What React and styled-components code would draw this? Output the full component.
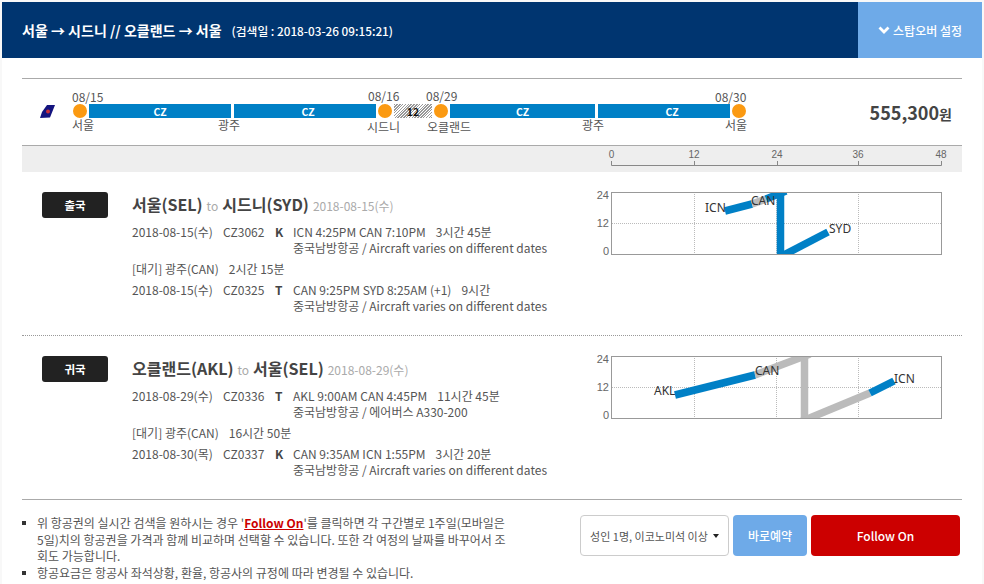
import styled, { createGlobalStyle } from "styled-components";

const GlobalStyle = createGlobalStyle`
  html, body {
    margin: 0;
    padding: 0;
    background: #f8f8f8;
  }
  body {
    font-family: "Noto Sans CJK KR", "Noto Sans", sans-serif;
    color: #555;
    font-size: 12px;
  }
`;

const Page = styled.div`
  width: 980px;
  height: 582px;
  margin: 2px 0 0 2px;
  background: #fff;
  overflow: hidden;
`;

const Header = styled.header`
  display: flex;
  align-items: center;
  height: 56px;
  background: #003570;
  color: #fff;
`;

const Route = styled.h1`
  margin: 0 10px 0 20px;
  font-size: 14px;
  font-weight: 700;
`;

const SearchDate = styled.span`
  flex: 1;
  font-size: 11.75px;
  font-weight: 500;
`;

const StopoverButton = styled.button`
  display: flex;
  align-items: center;
  justify-content: flex-end;
  gap: 3px;
  width: 124px;
  height: 56px;
  padding: 0 20px 0 0;
  border: 0;
  background: #6eaae8;
  color: #fff;
  font: 500 12px "Noto Sans CJK KR", sans-serif;
`;

const Content = styled.main`
  margin: 20px 20px 0;
`;

const Summary = styled.section`
  display: flex;
  align-items: center;
  height: 66px;
  border-top: 1px solid #aaa;
  border-bottom: 1px solid #aaa;
`;

const Logo = styled.svg`
  width: 16px;
  height: 16px;
  margin: 0 15px 0 18px;
  flex: none;
`;

const Track = styled.div`
  display: flex;
  align-items: center;
  height: 14px;
  position: relative;
  top: -1px;
`;

const Segment = styled.div`
  position: relative;
  display: flex;
  align-items: center;
  justify-content: center;
  box-sizing: border-box;
  flex: none;
  width: ${(p) => p.$width}px;
  height: 14px;
  margin-right: ${(p) => p.$gap || 0}px;
  padding-left: ${(p) => p.$pad || 0}px;
  background: #0080c6;
  color: #fff;
  font-size: 10.5px;
  font-weight: 700;
`;

const Layover = styled(Segment)`
  background: repeating-linear-gradient(135deg, #999 0 1px, #fff 1px 2px);
  color: #111;
`;

const Stop = styled.div`
  position: relative;
  z-index: 1;
  flex: none;
  box-sizing: content-box;
  width: 14px;
  height: 14px;
  border-radius: 50%;
  border: 2px solid #fff;
  background: #fb9a12;
`;

const Label = styled.span`
  position: absolute;
  left: ${(p) => p.$left}px;
  top: ${(p) => p.$top}px;
  white-space: nowrap;
  font-size: 12px;
  font-weight: 400;
  line-height: 16px;
  color: #555;
`;

const Price = styled.div`
  margin-left: auto;
  margin-right: 10px;
  color: #444;
  font-size: 18px;
  font-weight: 700;
  small {
    font-size: 14px;
    font-weight: 700;
  }
`;

const AxisBand = styled.div`
  display: flex;
  justify-content: flex-end;
  height: 26px;
  background: #eee;
`;

const Axis = styled.svg`
  width: 356px;
  height: 26px;
  font-family: "Liberation Sans", sans-serif;
`;

const Leg = styled.section`
  display: grid;
  grid-template-columns: 110px 1fr 370px;
  height: ${(p) => p.$height}px;
  padding-top: 20px;
  box-sizing: border-box;
  border-bottom: ${(p) => (p.$last ? "0" : "1px dotted #999")};
`;

const Badge = styled.div`
  display: flex;
  align-items: center;
  justify-content: center;
  width: 66px;
  height: 26px;
  margin-left: 20px;
  border-radius: 3px;
  background: #222;
  color: #fff;
  font-size: 11.5px;
  font-weight: 700;
`;

const LegTitle = styled.h2`
  display: flex;
  align-items: baseline;
  gap: 4px;
  margin: 0 0 8px;
  height: 24px;
  line-height: 24px;
  font-size: 16px;
  font-weight: 700;
  color: #444;
  span {
    font-size: 12px;
    font-weight: 400;
    color: #aaa;
  }
`;

const Flight = styled.div`
  display: grid;
  grid-template-columns: 91px 52px 18px 1fr;
  line-height: 16px;
  margin-bottom: 5px;
  white-space: nowrap;
`;

const Cabin = styled.b`
  font-weight: 700;
  color: #444;
`;

const Spacer = styled.span`
  margin-left: ${(p) => p.$size || 10}px;
`;

const Layout = styled.div`
  line-height: 16px;
  margin-bottom: 5px;
`;

const ChartSvg = styled.svg`
  display: block;
  width: 350px;
  height: 80px;
  margin-top: -4px;
`;

const Footer = styled.footer`
  display: flex;
  justify-content: space-between;
  height: 83px;
  padding-top: 15px;
  box-sizing: border-box;
  border-top: 1px solid #aaa;
`;

const Notes = styled.ul`
  width: 470px;
  margin: 0;
  padding: 0 0 0 15px;
  list-style: none;
  line-height: 16.5px;
  font-size: 12px;
  color: #555;
  word-break: break-all;
`;

const Note = styled.li`
  position: relative;
  &::before {
    content: "";
    position: absolute;
    left: -15px;
    top: 6px;
    width: 4px;
    height: 4px;
    background: #333;
  }
`;

const FollowLink = styled.a`
  color: #c00;
  font-weight: 700;
  text-decoration: underline;
`;

const Actions = styled.div`
  display: flex;
  gap: 4px;
  height: 41px;
  margin-right: 2px;
`;

const ClassSelect = styled.button`
  display: flex;
  align-items: center;
  justify-content: center;
  gap: 5px;
  width: 149px;
  padding: 0;
  border: 1px solid #ccc;
  border-radius: 4px;
  background: #fff;
  color: #555;
  font: 400 11px "Noto Sans CJK KR", sans-serif;
  &::after {
    content: "";
    border-top: 4px solid #222;
    border-left: 3px solid transparent;
    border-right: 3px solid transparent;
  }
`;

const ActionButton = styled.button`
  width: ${(p) => p.$width}px;
  padding: 0;
  border: 0;
  border-radius: 4px;
  background: ${(p) => p.$bg};
  color: #fff;
  font: 500 12px "Noto Sans CJK KR", sans-serif;
`;

const legs = [
  {
    badge: "출국",
    height: 164,
    from: "서울(SEL)",
    to: "시드니(SYD)",
    date: "2018-08-15(수)",
    flights: [
      { date: "2018-08-15(수)", no: "CZ3062", cabin: "K", route: "ICN 4:25PM CAN 7:10PM", time: "3시간 45분", plane: "중국남방항공 / Aircraft varies on different dates" },
      { date: "2018-08-15(수)", no: "CZ0325", cabin: "T", route: "CAN 9:25PM SYD 8:25AM (+1)", time: "9시간", plane: "중국남방항공 / Aircraft varies on different dates" },
    ],
    wait: { city: "광주(CAN)", time: "2시간 15분" },
    lines: [
      { color: "#0080c6", pts: "725,211 752,204" },
      { color: "#bbb", pts: "752,204 766,199" },
      { color: "#0080c6", pts: "766,199 786,191" },
      { color: "#0080c6", pts: "780.5,190 780.5,256" },
      { color: "#0080c6", pts: "778,258 828,232" },
    ],
    top: 192,
    labels: [
      { text: "ICN", x: 705, y: 212 },
      { text: "CAN", x: 751, y: 205 },
      { text: "SYD", x: 829, y: 233 },
    ],
  },
  {
    badge: "귀국",
    height: 163,
    from: "오클랜드(AKL)",
    to: "서울(SEL)",
    date: "2018-08-29(수)",
    flights: [
      { date: "2018-08-29(수)", no: "CZ0336", cabin: "T", route: "AKL 9:00AM CAN 4:45PM", time: "11시간 45분", plane: "중국남방항공 / 에어버스 A330-200" },
      { date: "2018-08-30(목)", no: "CZ0337", cabin: "K", route: "CAN 9:35AM ICN 1:55PM", time: "3시간 20분", plane: "중국남방항공 / Aircraft varies on different dates" },
    ],
    wait: { city: "광주(CAN)", time: "16시간 50분" },
    lines: [
      { color: "#bbb", pts: "755,375 810,354" },
      { color: "#bbb", pts: "804.5,354 804.5,420" },
      { color: "#bbb", pts: "800,422 870,393" },
      { color: "#0080c6", pts: "675,395 755,375" },
      { color: "#0080c6", pts: "870,393 894,381" },
    ],
    top: 356,
    labels: [
      { text: "AKL", x: 654, y: 395 },
      { text: "CAN", x: 755, y: 375 },
      { text: "ICN", x: 894, y: 383 },
    ],
  },
];

// chart coordinates below are page x, with the svg starting at page x 592
function Chart({ leg, id }) {
  const ox = 592;
  const gridX = [694, 776, 858];
  return (
    <ChartSvg viewBox="0 -4 350 80">
      <defs>
        <clipPath id={id}>
          <rect x="19.5" y="0" width="330" height="62" />
        </clipPath>
      </defs>
      {gridX.map((x) => (
        <line key={x} x1={x - ox + 0.5} x2={x - ox + 0.5} y1="0" y2="62" stroke="#bbb" strokeDasharray="1 1" />
      ))}
      <line x1="20" x2="349" y1="31.5" y2="31.5" stroke="#bbb" strokeDasharray="1 1" />
      <g clipPath={`url(#${id})`}>
        {leg.lines.map((l) => (
          <polyline
            key={l.pts}
            points={l.pts
              .split(" ")
              .map((p) => {
                const [x, y] = p.split(",").map(Number);
                return `${x - ox},${y - leg.top}`;
              })
              .join(" ")}
            fill="none"
            stroke={l.color}
            strokeWidth="7.5"
          />
        ))}
      </g>
      <rect x="19.5" y="0.5" width="330" height="62" fill="none" stroke="#999" />
      {[["24", 7], ["12", 35], ["0", 63]].map(([t, y]) => (
        <text key={t} x="17" y={y} textAnchor="end" fontSize="11" fill="#666" fontFamily="Liberation Sans, sans-serif">
          {t}
        </text>
      ))}
      {leg.labels.map((l) => (
        <text key={l.text} x={l.x - ox} y={l.y - leg.top} fontSize="12" fill="#333" fontFamily="Noto Sans, sans-serif">
          {l.text}
        </text>
      ))}
    </ChartSvg>
  );
}

function FlightRow({ flight }) {
  return (
    <Flight>
      <span>{flight.date}</span>
      <span>{flight.no}</span>
      <Cabin>{flight.cabin}</Cabin>
      <div>
        {flight.route}
        <Spacer />
        {flight.time}
        <br />
        {flight.plane}
      </div>
    </Flight>
  );
}

function LegBlock({ leg, last, id }) {
  return (
    <Leg $height={leg.height} $last={last}>
      <Badge>{leg.badge}</Badge>
      <div>
        <LegTitle>
          {leg.from} <span>to</span> {leg.to} <span>{leg.date}</span>
        </LegTitle>
        <FlightRow flight={leg.flights[0]} />
        <Layout>
          [대기] {leg.wait.city}
          <Spacer />
          {leg.wait.time}
        </Layout>
        <FlightRow flight={leg.flights[1]} />
      </div>
      <Chart leg={leg} id={id} />
    </Leg>
  );
}

export default function App() {
  return (
    <>
      <GlobalStyle />
      <Page>
        <Header>
          <Route>서울 → 시드니 // 오클랜드 → 서울</Route>
          <SearchDate>(검색일 : 2018-03-26 09:15:21)</SearchDate>
          <StopoverButton>
            <svg width="12" height="12" viewBox="0 0 12 12">
              <path d="M1.5 3.5 6 8l4.5-4.5" fill="none" stroke="#fff" strokeWidth="2.8" />
            </svg>
            스탑오버 설정
          </StopoverButton>
        </Header>
        <Content>
          <Summary>
            <Logo viewBox="0 0 16 16">
              <path d="M7 1h8l-5 12.5-10 .5 2-6z" fill="#14147f" />
              <circle cx="8" cy="7.5" r="2" fill="#c8303a" />
            </Logo>
            <Track>
              <Stop>
                <Label $left={-1} $top={-15}>08/15</Label>
                <Label $left={-1} $top={13}>서울</Label>
              </Stop>
              <Segment $width={142} $gap={3}>
                CZ
                <Label $left={129} $top={13}>광주</Label>
              </Segment>
              <Segment $width={142} $pad={6}>CZ</Segment>
              <Stop>
                <Label $left={-10} $top={-16}>08/16</Label>
                <Label $left={-11} $top={15}>시드니</Label>
              </Stop>
              <Layover $width={38}>12</Layover>
              <Stop>
                <Label $left={-8} $top={-16}>08/29</Label>
                <Label $left={-7} $top={15}>오클랜드</Label>
              </Stop>
              <Segment $width={145} $gap={3}>
                CZ
                <Label $left={132} $top={13}>광주</Label>
              </Segment>
              <Segment $width={132} $pad={16}>CZ</Segment>
              <Stop>
                <Label $left={-17} $top={-15}>08/30</Label>
                <Label $left={-7} $top={13}>서울</Label>
              </Stop>
            </Track>
            <Price>
              555,300<small>원</small>
            </Price>
          </Summary>
          <AxisBand>
            <Axis viewBox="-4 0 356 26">
              <path d="M1.5 15v4.5h330M84.5 15v4M167.5 15v4M248.5 15v4M331.5 15v4.5" fill="none" stroke="#888" />
              {[["0", 1.5], ["12", 84], ["24", 167], ["36", 248], ["48", 331]].map(([t, x]) => (
                <text key={t} x={x} y="12" textAnchor="middle" fontSize="10" fill="#666">
                  {t}
                </text>
              ))}
            </Axis>
          </AxisBand>
          {legs.map((leg, i) => (
            <LegBlock key={leg.badge} leg={leg} id={`clip-${i}`} last={i === legs.length - 1} />
          ))}
          <Footer>
            <Notes>
              <Note>
                위 항공권의 실시간 검색을 원하시는 경우 '<FollowLink>Follow On</FollowLink>'를 클릭하면 각 구간별로 1주일(모바일은 5일)치의 항공권을 가격과 함께 비교하며 선택할 수 있습니다. 또한 각 여정의 날짜를 바꾸어서 조회도 가능합니다.
              </Note>
              <Note>항공요금은 항공사 좌석상황, 환율, 항공사의 규정에 따라 변경될 수 있습니다.</Note>
            </Notes>
            <Actions>
              <ClassSelect>성인 1명, 이코노미석 이상</ClassSelect>
              <ActionButton $width={74} $bg="#6eaae8">바로예약</ActionButton>
              <ActionButton $width={149} $bg="#cc0000">Follow On</ActionButton>
            </Actions>
          </Footer>
        </Content>
      </Page>
    </>
  );
}
